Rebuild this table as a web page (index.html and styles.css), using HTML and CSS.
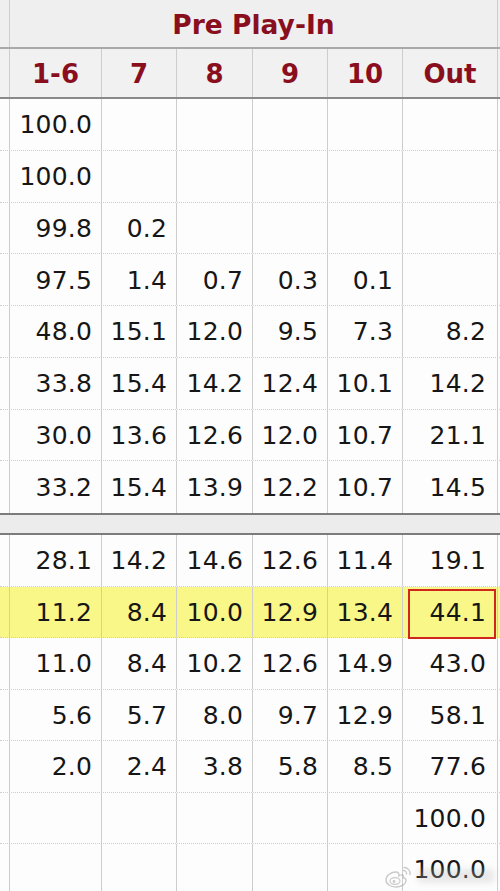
FILE: index.html
```html
<!DOCTYPE html>
<html lang="en">
<head>
<meta charset="utf-8">
<title>Pre Play-In</title>
<link rel="stylesheet" href="styles.css">
</head>
<body>
<div class="table">
  <div class="row title-row">
    <div class="gutter"></div>
    <div class="cell title">Pre Play-In</div>
    <div class="edge"></div>
  </div>
  <div class="row head-row">
    <div class="gutter"></div>
    <div class="cell hd">1-6</div>
    <div class="cell hd">7</div>
    <div class="cell hd">8</div>
    <div class="cell hd">9</div>
    <div class="cell hd">10</div>
    <div class="cell hd">Out</div>
    <div class="edge"></div>
  </div>

  <div class="row top"><div class="gutter"></div><div class="cell">100.0</div><div class="cell"></div><div class="cell"></div><div class="cell"></div><div class="cell"></div><div class="cell out"></div><div class="edge"></div></div>
  <div class="row top"><div class="gutter"></div><div class="cell">100.0</div><div class="cell"></div><div class="cell"></div><div class="cell"></div><div class="cell"></div><div class="cell out"></div><div class="edge"></div></div>
  <div class="row top"><div class="gutter"></div><div class="cell">99.8</div><div class="cell">0.2</div><div class="cell"></div><div class="cell"></div><div class="cell"></div><div class="cell out"></div><div class="edge"></div></div>
  <div class="row top"><div class="gutter"></div><div class="cell">97.5</div><div class="cell">1.4</div><div class="cell">0.7</div><div class="cell">0.3</div><div class="cell">0.1</div><div class="cell out"></div><div class="edge"></div></div>
  <div class="row top"><div class="gutter"></div><div class="cell">48.0</div><div class="cell">15.1</div><div class="cell">12.0</div><div class="cell">9.5</div><div class="cell">7.3</div><div class="cell out">8.2</div><div class="edge"></div></div>
  <div class="row top"><div class="gutter"></div><div class="cell">33.8</div><div class="cell">15.4</div><div class="cell">14.2</div><div class="cell">12.4</div><div class="cell">10.1</div><div class="cell out">14.2</div><div class="edge"></div></div>
  <div class="row top"><div class="gutter"></div><div class="cell">30.0</div><div class="cell">13.6</div><div class="cell">12.6</div><div class="cell">12.0</div><div class="cell">10.7</div><div class="cell out">21.1</div><div class="edge"></div></div>
  <div class="row top last-top"><div class="gutter"></div><div class="cell">33.2</div><div class="cell">15.4</div><div class="cell">13.9</div><div class="cell">12.2</div><div class="cell">10.7</div><div class="cell out">14.5</div><div class="edge"></div></div>

  <div class="divider"></div>

  <div class="row"><div class="gutter"></div><div class="cell">28.1</div><div class="cell">14.2</div><div class="cell">14.6</div><div class="cell">12.6</div><div class="cell">11.4</div><div class="cell out">19.1</div><div class="edge"></div></div>
  <div class="row hl"><div class="gutter"></div><div class="cell">11.2</div><div class="cell">8.4</div><div class="cell">10.0</div><div class="cell">12.9</div><div class="cell">13.4</div><div class="cell out boxed">44.1</div><div class="edge"></div></div>
  <div class="row"><div class="gutter"></div><div class="cell">11.0</div><div class="cell">8.4</div><div class="cell">10.2</div><div class="cell">12.6</div><div class="cell">14.9</div><div class="cell out">43.0</div><div class="edge"></div></div>
  <div class="row"><div class="gutter"></div><div class="cell">5.6</div><div class="cell">5.7</div><div class="cell">8.0</div><div class="cell">9.7</div><div class="cell">12.9</div><div class="cell out">58.1</div><div class="edge"></div></div>
  <div class="row"><div class="gutter"></div><div class="cell">2.0</div><div class="cell">2.4</div><div class="cell">3.8</div><div class="cell">5.8</div><div class="cell">8.5</div><div class="cell out">77.6</div><div class="edge"></div></div>
  <div class="row"><div class="gutter"></div><div class="cell"></div><div class="cell"></div><div class="cell"></div><div class="cell"></div><div class="cell"></div><div class="cell out">100.0</div><div class="edge"></div></div>
  <div class="row"><div class="gutter"></div><div class="cell"></div><div class="cell"></div><div class="cell"></div><div class="cell"></div><div class="cell"></div><div class="cell out">100.0</div><div class="edge"></div></div>
</div>

<div class="watermark" aria-hidden="true">
  <svg class="wb-logo" width="30" height="24" viewBox="0 0 30 24">
    <path d="M12 8c-5 0-10 3.5-10 8 0 4 4.5 7 10 7s10-3 10-6.5c0-2-1.6-2.6-2.8-3 .6-1.5.3-3-1.8-2.6-1.4.3-2.5.9-2.5.9s.5-1.8-.5-2.8C13.8 8.4 12.8 8 12 8z" fill="none" stroke="#999" stroke-width="1.4"/>
    <ellipse cx="11" cy="17" rx="5" ry="3.4" fill="none" stroke="#999" stroke-width="1.2"/>
    <circle cx="10" cy="17.5" r="1.4" fill="#999"/>
    <path d="M20 3.5a6 6 0 0 1 6 7" fill="none" stroke="#999" stroke-width="1.4" stroke-linecap="round"/>
    <path d="M19.5 6.5a3 3 0 0 1 3 3.6" fill="none" stroke="#999" stroke-width="1.3" stroke-linecap="round"/>
  </svg>
  <div class="wb-smear"></div>
</div>
</body>
</html>
```

FILE: styles.css
```css
html, body {
  margin: 0;
  padding: 0;
  background: #ffffff;
}

body {
  width: 500px;
  height: 891px;
  overflow: hidden;
  position: relative;
  font-family: "DejaVu Sans", Verdana, sans-serif;
}

.table {
  display: flex;
  flex-direction: column;
}

.row {
  display: grid;
  grid-template-columns: 9px 92px 75px 76px 75px 75px 95px 3px;
  height: 51.5px;
  flex: none;
  box-sizing: border-box;
  border-bottom: 1px dotted #cfcfcf;
  background: #fdfdfd;
}

.row.top {
  height: 51.75px;
}

.row.last-top {
  border-bottom: none;
}

.cell {
  border-left: 1px solid #cdcdcd;
  display: flex;
  align-items: center;
  justify-content: flex-end;
  padding-right: 9px;
  padding-top: 1px;
  font-size: 25px;
  color: #161616;
  letter-spacing: 0.2px;
}

.cell.out {
  padding-right: 11px;
}

.edge {
  border-left: 1px solid #cdcdcd;
}

.gutter {
  background: transparent;
}

/* Title row */
.title-row {
  grid-template-columns: 9px 488px 3px;
  height: 49px;
  background: #efefef;
  border-bottom: 2px solid #a9a9a9;
}

.title {
  justify-content: center;
  padding-right: 0;
  padding-top: 1px;
  font-weight: bold;
  font-size: 26.5px;
  color: #8a0f1e;
  letter-spacing: 0;
}

/* Header row */
.head-row {
  height: 50px;
  background: #f1f1f1;
  border-bottom: 2px solid #8a8a8a;
}

.hd {
  justify-content: center;
  padding-right: 0;
  padding-top: 2px;
  font-weight: bold;
  font-size: 26px;
  color: #8a0f1e;
  letter-spacing: 0;
}

/* Divider band */
.divider {
  height: 22px;
  flex: none;
  box-sizing: border-box;
  background: #ececec;
  border-top: 2px solid #7c7c7c;
  border-bottom: 2px solid #7c7c7c;
}

/* Highlighted row */
.row.hl {
  background: #f9f788;
}

.boxed {
  position: relative;
}

.boxed::after {
  content: "";
  position: absolute;
  left: 5px;
  right: 1px;
  top: 2px;
  bottom: -2px;
  border: 2.5px solid #d1261c;
}

/* Watermark */
.watermark {
  position: absolute;
  right: 6px;
  bottom: 3px;
  display: flex;
  align-items: center;
  gap: 4px;
  opacity: 0.5;
}

.wb-smear {
  width: 76px;
  height: 14px;
  border-radius: 3px;
  background: #b8b8b8;
  filter: blur(3px);
  opacity: 0.6;
}
```
